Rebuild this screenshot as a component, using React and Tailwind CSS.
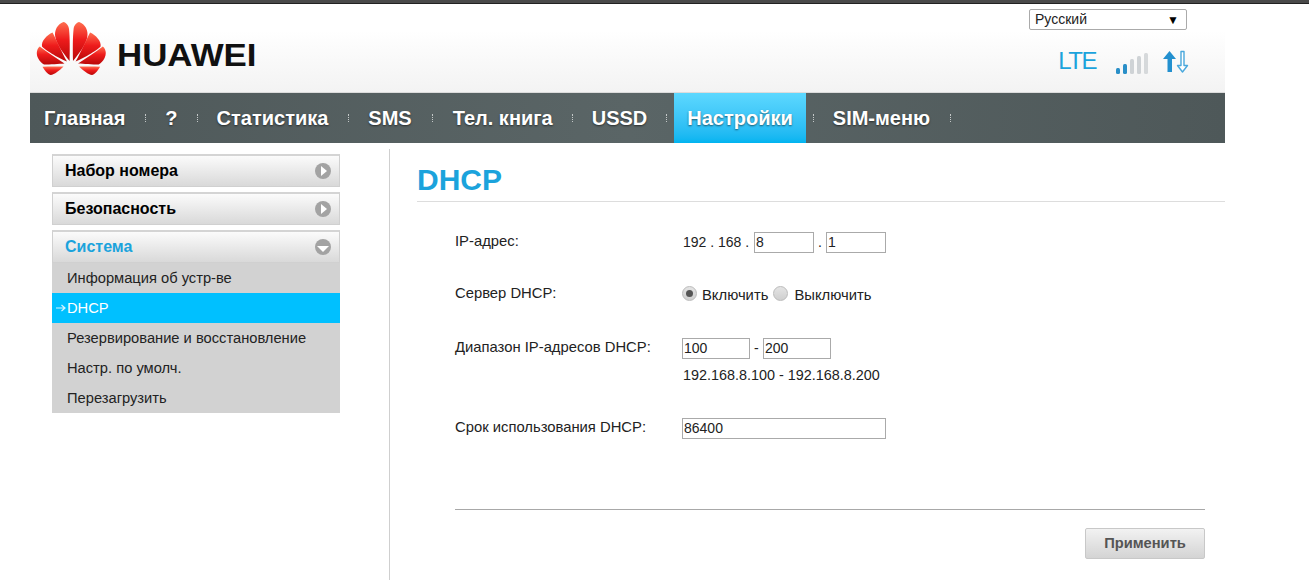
import React from "react";

const navItems = [
  { label: "Главная", sep: "ml-[20px] mr-[19px]" },
  { label: "?", sep: "ml-[19px] mr-[19px]" },
  { label: "Статистика", sep: "ml-[20px] mr-[19px]" },
  { label: "SMS", sep: "ml-[20px] mr-[20px]" },
  { label: "Тел. книга", sep: "ml-[19px] mr-[19px]" },
  { label: "USSD", sep: "ml-[19px] mr-[20px]" },
  { label: "Настройки", sep: "ml-[20px] mr-[19px]", active: true },
  { label: "SIM-меню", sep: "ml-[20px] mr-[20px]" },
];
const subItems = ["Информация об устр-ве", "DHCP", "Резервирование и восстановление", "Настр. по умолч.", "Перезагрузить"];

function Logo() {
  const petals = (
    <>
      <path d="M33.6 41 C33.8 30 34 18 33 9 C32.5 5 30 2.5 27.5 2 C21.5 4 18 10.5 19.3 17 C20.5 24 27 33 33.6 41Z" />
      <path d="M31 41.5 C26 33 21 21 16.5 12.5 C11 15 5 21 6 26.5 C8 29 22 38 31 41.5Z" />
      <path d="M28.5 43.5 C20 38 11 32 3.8 26.5 C0.5 29 0 34 2 38 C3.5 41 6 43.5 8 44.5 C14 44.5 23 44 28.5 43.5Z" />
      <path d="M27.5 46.5 C21 46.5 13 46.5 6.5 46.7 C8.5 50 11 54 14.5 55 C18.5 54.5 23.5 50.5 27.5 46.5Z" />
    </>
  );
  return (
    <svg width="70" height="57" viewBox="0 0 70 57" className="shrink-0">
      <defs>
        <linearGradient id="petal" x1="0" y1="0" x2="0" y2="1">
          <stop offset="0" stopColor="#ff6f50" />
          <stop offset="0.45" stopColor="#ee1c1c" />
          <stop offset="1" stopColor="#b80808" />
        </linearGradient>
      </defs>
      <g fill="url(#petal)">{petals}</g>
      <g fill="url(#petal)" transform="translate(70.6 0) scale(-1 1)">{petals}</g>
    </svg>
  );
}

function SignalIcon() {
  const bars = [
    { x: 0, h: 6, c: "#2a8fc8" },
    { x: 7, h: 10, c: "#2a8fc8" },
    { x: 14, h: 15, c: "#cfd3d6" },
    { x: 21, h: 18, c: "#cfd3d6" },
    { x: 28, h: 21, c: "#d6d9db" },
  ];
  return (
    <svg width="32" height="22" viewBox="0 0 32 22">
      {bars.map((b) => (
        <rect key={b.x} x={b.x} y={21 - b.h} width="4" height={b.h} rx="1.5" fill={b.c} />
      ))}
    </svg>
  );
}

function ArrowsIcon() {
  return (
    <svg width="27" height="24" viewBox="0 0 27 24">
      <path d="M7.5 1 L14 9 H10 V22 H5.5 V9 H1 Z" fill="#2390cf" />
      <path d="M19 1.5 H22 V15.5 H25.5 L20.5 22 L15.5 15.5 H19 Z" fill="#fff" stroke="#4aa8dc" strokeWidth="1.4" strokeLinejoin="round" />
    </svg>
  );
}

function MenuHead({ label, active, open }) {
  return (
    <div className="flex items-center justify-between h-[33px] pl-[12px] pr-[8px] border border-[#d0d0d0] border-t-2 border-t-[#d4d4d4] bg-gradient-to-b from-[#fbfbfb] to-[#d9d9d9]">
      <span className={"text-[16px] font-bold " + (active ? "text-[#1ba3dc]" : "text-black")}>{label}</span>
      <span className="flex items-center justify-center w-[16px] h-[16px] rounded-full bg-[#a3a3a3]">
        {open ? (
          <span className="mt-[3px] border-x-[6px] border-x-transparent border-t-[6px] border-t-white" />
        ) : (
          <span className="ml-[2px] border-y-[5px] border-y-transparent border-l-[6px] border-l-white" />
        )}
      </span>
    </div>
  );
}

function Radio({ checked }) {
  return (
    <span className="flex items-center justify-center w-[15px] h-[15px] rounded-full border border-[#bbb] bg-gradient-to-b from-[#e4e4e4] to-[#cfcfcf]">
      {checked && <span className="w-[7px] h-[7px] rounded-full bg-[#555]" />}
    </span>
  );
}

function Field({ value, className }) {
  return (
    <input
      readOnly
      value={value}
      className={"h-[21px] px-[1px] border border-[#aaa] bg-white text-[14px] text-[#222] outline-none " + className}
    />
  );
}

export default function App() {
  return (
    <div className="h-[580px] w-[1309px] overflow-hidden bg-white text-[#222] font-['Liberation_Sans',Arial,sans-serif]">
      <div className="h-[4px] bg-[#4a4a4a] border-b border-[#222]" />
      <div className="ml-[30px] w-[1195px]">
        <header className="relative flex h-[89px] items-start justify-between bg-gradient-to-b from-white from-30% to-[#f3f3f3] border-b border-[#dcdcdc]">
          <div className="flex items-center ml-[6px] mt-[16px]">
            <Logo />
            <span className="ml-[11px] mt-[13px] origin-left scale-x-[1.125] text-[31px] leading-none font-bold text-[#111]">HUAWEI</span>
          </div>
          <div className="flex flex-col items-end mr-[38px]">
            <div className="flex items-center justify-between w-[158px] h-[21px] mt-[5px] pl-[5px] pr-[7px] border border-[#aaa] rounded-[2px] bg-white text-[14px] text-[#222]">
              <span>Русский</span>
              <span className="text-[12px] text-black">▼</span>
            </div>
            <div className="flex items-center mt-[19px] mr-[-2px]">
              <span className="-mt-[2px] text-[24px] leading-[28px] tracking-[-1.5px] text-[#1ba3dc]">LTE</span>
              <span className="ml-[20px] mt-[3px] flex"><SignalIcon /></span>
              <span className="ml-[14px] flex"><ArrowsIcon /></span>
            </div>
          </div>
        </header>

        <nav className="flex items-center h-[50px] pl-[14px] bg-gradient-to-r from-[#4e5859] via-[#5a6566] to-[#4e5859]">
          {navItems.map((item) => (
            <React.Fragment key={item.label}>
              <span
                className={
                  "flex h-[50px] items-center text-[20px] font-bold text-white [text-shadow:0_1px_2px_rgba(0,0,0,0.55)] " +
                  (item.active ? "-mx-[13px] px-[13px] bg-gradient-to-b from-[#5cd8ff] to-[#00b4f0]" : "")
                }
              >
                {item.label}
              </span>
              <span className={"h-[8px] w-px border-l border-dotted border-[#c4c8c8] " + item.sep} />
            </React.Fragment>
          ))}
        </nav>

        <main className="flex">
          <aside className="ml-[22px] mt-[11px] w-[288px] shrink-0">
            <MenuHead label="Набор номера" />
            <div className="mt-[5px]"><MenuHead label="Безопасность" /></div>
            <div className="mt-[5px]"><MenuHead label="Система" active open /></div>
            <ul className="bg-[#d2d2d2] text-[14.7px]">
              {subItems.map((item) => (
                <li
                  key={item}
                  className={"flex items-center h-[30px] pl-[15px] " + (item === "DHCP" ? "bg-[#00c0ff] text-white" : "text-[#222]")}
                >
                  {item === "DHCP" && (
                    <svg width="10" height="8" viewBox="0 0 10 8" className="-ml-[11px] mr-[1px]">
                      <path d="M0 4 H9 M5.5 1 L9 4 L5.5 7" fill="none" stroke="#d8f4ff" strokeWidth="1.2" />
                    </svg>
                  )}
                  {item}
                </li>
              ))}
            </ul>
          </aside>

          <section className="ml-[49px] mt-[6px] h-[431px] flex-1 border-l border-[#cfcfcf] pl-[27px]">
            <h1 className="h-[53px] pt-[14px] border-b border-[#dddddd] text-[30px] leading-[34px] font-bold text-[#1ba3dc]">DHCP</h1>

            <div className="ml-[38px] mr-[20px] text-[14.8px]">
              <div className="flex mt-[30px] h-[21px] items-center">
                <span className="w-[228px] -mt-[3px]">IP-адрес:</span>
                <span className="w-[71px] whitespace-pre text-[14px]">192 . 168 . </span>
                <Field value="8" className="w-[60px]" />
                <span className="mx-[4px] w-[4px] text-[14px]">.</span>
                <Field value="1" className="w-[60px]" />
              </div>

              <div className="flex mt-[31px] h-[21px] items-center">
                <span className="w-[227px] -mt-[3px]">Сервер DHCP:</span>
                <span className="-mt-[3px]"><Radio checked /></span>
                <span className="ml-[5px] mt-[1px]">Включить</span>
                <span className="ml-[5px] -mt-[3px]"><Radio /></span>
                <span className="ml-[6px] mt-[1px]">Выключить</span>
              </div>

              <div className="flex mt-[33px] h-[21px] items-center">
                <span className="w-[227px] -mt-[3px]">Диапазон IP-адресов DHCP:</span>
                <Field value="100" className="w-[68px]" />
                <span className="mx-[4px] w-[5px] text-[14px]">-</span>
                <Field value="200" className="w-[68px]" />
              </div>
              <div className="pl-[228px] mt-[8px] leading-[16px] text-[14.4px]">192.168.8.100 - 192.168.8.200</div>

              <div className="flex mt-[35px] h-[21px] items-center">
                <span className="w-[227px] -mt-[3px]">Срок использования DHCP:</span>
                <Field value="86400" className="w-[204px]" />
              </div>

              <div className="mt-[70px] border-t border-[#a8a8a8] flex justify-end pt-[18px]">
                <button className="w-[120px] h-[31px] rounded-[2px] border border-[#c8c8c8] bg-gradient-to-b from-[#f2f2f2] to-[#d4d4d4] text-[14.7px] font-bold text-[#555]">
                  Применить
                </button>
              </div>
            </div>
          </section>
        </main>
      </div>
    </div>
  );
}
